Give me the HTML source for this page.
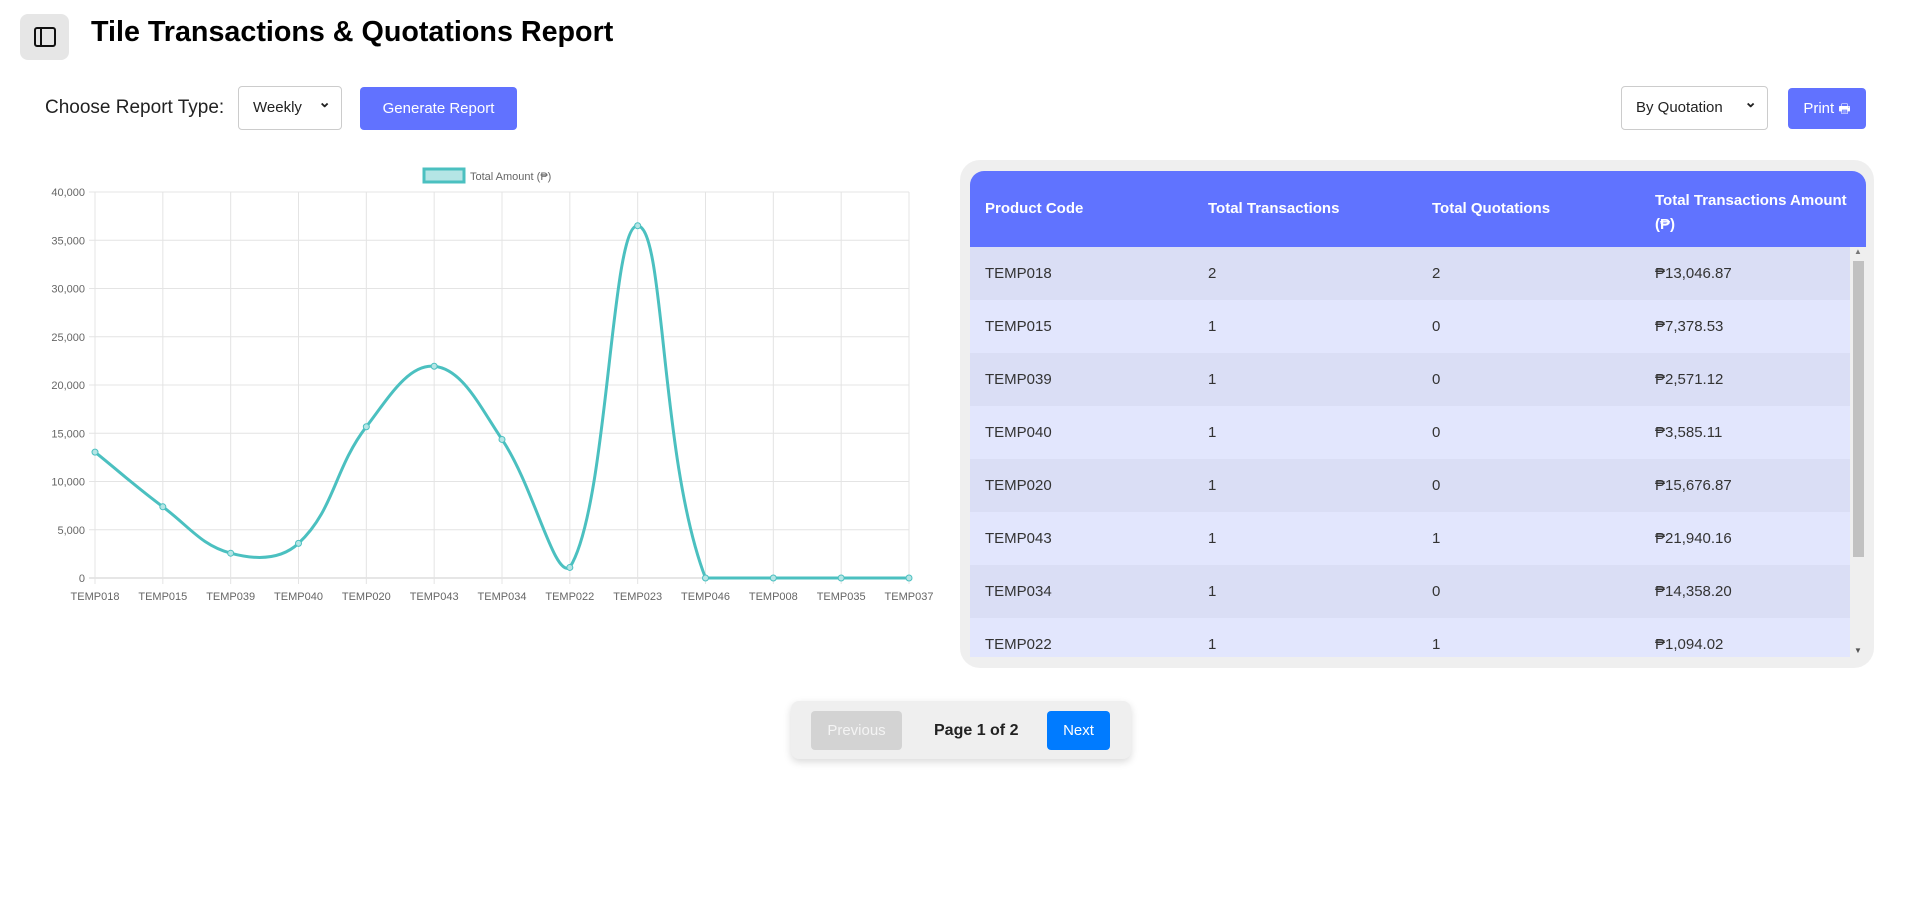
<!DOCTYPE html>
<html><head><meta charset="utf-8"><style>
*{box-sizing:border-box;margin:0;padding:0}
body{width:1919px;height:906px;background:#fff;font-family:"Liberation Sans",sans-serif;color:#222;position:relative;overflow:hidden}
.abs{position:absolute}
.tog{left:20px;top:14px;width:49px;height:46px;background:#e6e6e6;border-radius:8px}
.tog div{position:absolute;left:14px;top:13px;width:22px;height:20px;border:2px solid #111;border-radius:3px}
.tog div:before{content:"";position:absolute;left:4px;top:0;bottom:0;border-left:2px solid #111}
h1{position:absolute;left:91px;top:16px;font-size:28.7px;font-weight:bold;color:#000}
.lbl{left:45px;top:97px;font-size:19px;color:#222}
.sel{border:1px solid #ccc;border-radius:4px;background:#fff;font-size:15px;padding-left:14px;line-height:42px}
.sel:after{content:"⌄";position:absolute;right:10px;top:-5px;font-size:15px;font-weight:bold}
.btn{background:#6172ff;color:#fff;border-radius:4px;font-size:15px;text-align:center}
.card{left:960px;top:160px;width:914px;height:508px;background:#efefef;border-radius:20px}
.tbl{position:absolute;left:10px;top:11px;width:896px;height:486px;overflow:hidden;border-radius:14px 14px 0 0}
.hd{height:76px;background:#6073ff;color:#fff;font-weight:bold;font-size:15px;position:relative}
.hd span{position:absolute}
.row{height:53px;position:relative;font-size:15px;color:#333}
.row span{position:absolute;top:18px}
.sb{position:absolute;right:0;top:76px;width:16px;height:410px;background:#efefef}
.sb div{position:absolute;left:3px;top:14px;width:11px;height:296px;background:#c1c1c1}
</style></head><body>
<div class="abs tog"><div></div></div>
<h1>Tile Transactions &amp; Quotations Report</h1>
<div class="abs lbl">Choose Report Type:</div>
<div class="abs sel" style="left:238px;top:86px;width:104px;height:44px">Weekly</div>
<div class="abs btn" style="left:360px;top:87px;width:157px;height:43px;line-height:43px">Generate Report</div>
<div class="abs sel" style="left:1621px;top:86px;width:147px;height:44px">By Quotation</div>
<div class="abs btn" style="left:1788px;top:88px;width:78px;height:41px;line-height:41px">Print <span style="font-size:13px">🖶</span></div>

<svg class="abs" style="left:0;top:150px" width="960" height="480" id="ch"></svg>

<div class="abs card"><div class="tbl">
<div class="hd"><span style="left:15px;top:29px">Product Code</span><span style="left:238px;top:29px">Total Transactions</span><span style="left:462px;top:29px">Total Quotations</span><span style="left:685px;top:18px;line-height:24px">Total Transactions Amount<br>(₱)</span></div>
<div id="rows"></div>
<div class="sb"><div></div><span style="position:absolute;left:4px;top:0;font-size:8px;color:#777">▲</span><span style="position:absolute;left:4px;bottom:2px;font-size:8px;color:#555">▼</span></div>
</div></div>

<div class="abs" style="left:791px;top:701px;width:340px;height:58px;background:#efefef;border-radius:8px;box-shadow:0 3px 8px rgba(0,0,0,.15)">
<div class="abs" style="left:20px;top:10px;width:91px;height:39px;background:#d3d3d3;border-radius:4px;color:#f4f4f4;font-size:15px;text-align:center;line-height:39px">Previous</div>
<div class="abs" style="left:143px;top:10px;line-height:39px;font-size:16px;font-weight:bold;color:#222">Page 1 of 2</div>
<div class="abs" style="left:256px;top:10px;width:63px;height:39px;background:#007bff;border-radius:4px;color:#fff;font-size:15px;text-align:center;line-height:39px">Next</div>
</div>
<script>
var data=[["TEMP018",2,2,"13,046.87"],["TEMP015",1,0,"7,378.53"],["TEMP039",1,0,"2,571.12"],["TEMP040",1,0,"3,585.11"],["TEMP020",1,0,"15,676.87"],["TEMP043",1,1,"21,940.16"],["TEMP034",1,0,"14,358.20"],["TEMP022",1,1,"1,094.02"]];
var h="";data.forEach(function(r,i){h+='<div class="row" style="background:'+(i%2?'#e2e6fd':'#dadef5')+'"><span style="left:15px">'+r[0]+'</span><span style="left:238px">'+r[1]+'</span><span style="left:462px">'+r[2]+'</span><span style="left:685px">₱'+r[3]+'</span></div>'});
document.getElementById('rows').innerHTML=h;
var labels=["TEMP018","TEMP015","TEMP039","TEMP040","TEMP020","TEMP043","TEMP034","TEMP022","TEMP023","TEMP046","TEMP008","TEMP035","TEMP037"];
var vals=[13046.87,7378.53,2571.12,3585.11,15676.87,21940.16,14358.2,1094.02,36500,0,0,0,0];
var L=95,R=909,T=42,B=428,s='';
var step=(R-L)/12;
for(var k=0;k<=8;k++){var y=T+(B-T)*k/8;s+='<line x1="'+(L-6)+'" x2="'+R+'" y1="'+y+'" y2="'+y+'" stroke="'+(k==8?'#ccc':'#e4e4e4')+'"/>';s+='<text x="'+(L-10)+'" y="'+(y+4)+'" text-anchor="end" font-size="11" fill="#666">'+(40000-k*5000).toLocaleString('en-US')+'</text>';}
var P=[];
for(var i=0;i<13;i++){var x=L+step*i;s+='<line x1="'+x+'" x2="'+x+'" y1="'+T+'" y2="'+(B+6)+'" stroke="#e4e4e4"/>';s+='<text x="'+x+'" y="'+(B+22)+'" text-anchor="middle" font-size="11" fill="#666">'+labels[i]+'</text>';P.push([x,B-(B-T)*vals[i]/40000]);}
var t=0.4,cps=[];
for(i=0;i<13;i++){var p0=P[Math.max(0,i-1)],p1=P[i],p2=P[Math.min(12,i+1)];var d01=Math.hypot(p1[0]-p0[0],p1[1]-p0[1]),d12=Math.hypot(p2[0]-p1[0],p2[1]-p1[1]);var s01=d01/(d01+d12)||0,s12=d12/(d01+d12)||0;var fa=t*s01,fb=t*s12;
cps.push([[p1[0]-fa*(p2[0]-p0[0]),Math.min(B,p1[1]-fa*(p2[1]-p0[1]))],[p1[0]+fb*(p2[0]-p0[0]),Math.min(B,p1[1]+fb*(p2[1]-p0[1]))]]);}
var d='M'+P[0][0]+' '+P[0][1];
for(i=1;i<13;i++){d+=' C'+cps[i-1][1][0]+' '+cps[i-1][1][1]+' '+cps[i][0][0]+' '+cps[i][0][1]+' '+P[i][0]+' '+P[i][1];}
s+='<path d="'+d+'" fill="none" stroke="#4bc0c0" stroke-width="3"/>';
P.forEach(function(p){s+='<circle cx="'+p[0]+'" cy="'+p[1]+'" r="3" fill="#b5e5e5" stroke="#4bc0c0" stroke-width="1"/>'});
s+='<rect x="424" y="19" width="40" height="13" fill="#b5e5e5" stroke="#4bc0c0" stroke-width="3"/><text x="470" y="30" font-size="11" fill="#666">Total Amount (₱)</text>';
document.getElementById('ch').innerHTML=s;
</script>
</body></html>
